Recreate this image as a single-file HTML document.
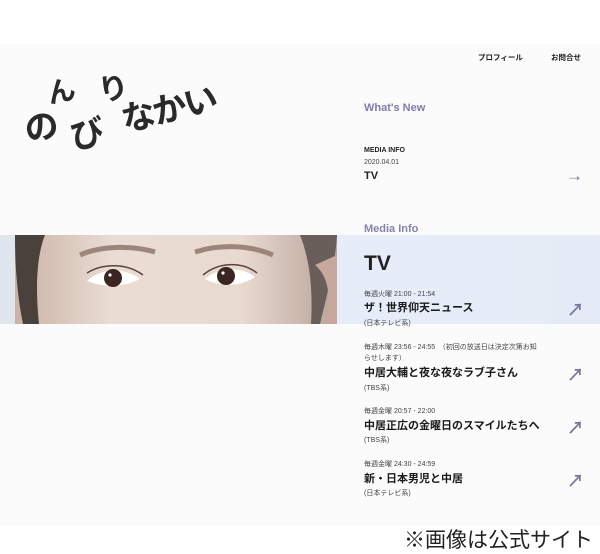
<!DOCTYPE html>
<html><head><meta charset="utf-8"><style>
*{margin:0;padding:0;box-sizing:border-box}
body{width:600px;height:552px;background:#fff;position:relative;overflow:hidden;font-family:"Liberation Sans","Noto Sans CJK JP",sans-serif;color:#222}
.a{position:absolute;white-space:nowrap}
#pg{position:absolute;left:0;top:44px;width:600px;height:482px;background:#fbfbfb}
.band{position:absolute;left:0;top:235px;width:600px;height:89px;background:linear-gradient(90deg,#dfe6f0,#e6edf8 60%,#e4ebf6)}
.hand{font-family:"Noto Sans CJK JP",sans-serif;font-size:34px;color:#2a2a2a;font-weight:bold}
.sm{font-size:7px;color:#444}
.tt{font-size:11px;font-weight:bold;color:#1a1a1a}
.ar{font-size:17px;color:#7a7898;font-weight:bold}
</style></head><body>
<div id="pg"></div>
<div class="band"></div>
<svg class="a" style="left:15px;top:235px" width="322" height="89" viewBox="0 0 322 89">
<defs><linearGradient id="sk" x1="0" x2="1"><stop offset="0" stop-color="#c9b2a6"/><stop offset=".3" stop-color="#eadcd2"/><stop offset=".7" stop-color="#e9dad0"/><stop offset="1" stop-color="#b8a398"/></linearGradient></defs>
<rect x="0" y="0" width="322" height="89" fill="url(#sk)"/>
<path d="M0 0H30C22 20 20 50 24 89H8C2 60 0 30 0 0Z" fill="#4a403c"/>
<path d="M322 0H285C295 25 298 55 296 89H305C312 60 320 30 322 0Z" fill="#6a5e5a"/>
<path d="M300 30C312 40 318 60 310 89H322V20Z" fill="#c6a99c"/>
<path d="M65 20C85 11 115 10 140 17" stroke="#9c857b" stroke-width="5" fill="none"/>
<path d="M180 17C205 9 235 10 258 20" stroke="#9c857b" stroke-width="5" fill="none"/>
<path d="M72 46C85 33 110 32 125 44C110 52 88 53 72 46Z" fill="#fff"/>
<path d="M190 44C205 31 228 32 240 42C225 52 205 52 190 44Z" fill="#fff"/>
<circle cx="98" cy="43" r="9" fill="#3a2522"/><circle cx="211" cy="41" r="9" fill="#3a2522"/>
<circle cx="95" cy="40" r="1.6" fill="#fff"/><circle cx="208" cy="38" r="1.6" fill="#fff"/>
<path d="M72 38C88 28 112 28 128 40" stroke="#5a443e" stroke-width="1.5" fill="none"/>
<path d="M188 40C205 26 228 27 242 38" stroke="#5a443e" stroke-width="1.5" fill="none"/>
</svg>
<div class="a hand" style="left:24px;top:100px;transform:rotate(-12deg)">の</div>
<div class="a hand" style="left:47px;top:70px;font-size:28px;transform:rotate(-12deg)">ん</div>
<div class="a hand" style="left:70px;top:107px;transform:rotate(-12deg)">び</div>
<div class="a hand" style="left:98px;top:64px;font-size:30px;transform:rotate(-12deg)">り</div>
<div class="a hand" style="left:120px;top:82px;letter-spacing:-2px;transform:rotate(-14deg)">なかい</div>
<div class="a" style="left:478px;top:52px;font-size:7.5px;font-weight:bold">プロフィール</div>
<div class="a" style="left:551px;top:52px;font-size:7.5px;font-weight:bold">お問合せ</div>
<div class="a" style="left:364px;top:102px;font-size:11px;font-weight:bold;color:#7f7cab">What's New</div>
<div class="a" style="left:364px;top:147px;font-size:7px;font-weight:bold">MEDIA INFO</div>
<div class="a sm" style="left:364px;top:159px">2020.04.01</div>
<div class="a" style="left:364px;top:170px;font-size:11px;font-weight:bold">TV</div>
<div class="a ar" style="left:566px;top:166px">→</div>
<div class="a" style="left:364px;top:223px;font-size:11px;font-weight:bold;color:#8582ad">Media Info</div>
<div class="a" style="left:364px;top:252px;font-size:21px;font-weight:bold">TV</div>
<div class="a sm" style="left:364px;top:289px">毎週火曜 21:00 - 21:54</div>
<div class="a tt" style="left:364px;top:299px">ザ！世界仰天ニュース</div>
<div class="a sm" style="left:364px;top:318px">(日本テレビ系)</div>
<div class="a ar" style="left:567px;top:296px">↗</div>
<div class="a sm" style="left:364px;top:342px">毎週木曜 23:56 - 24:55　（初回の放送日は決定次第お知</div>
<div class="a sm" style="left:364px;top:353px">らせします）</div>
<div class="a tt" style="left:364px;top:364px">中居大輔と夜な夜なラブ子さん</div>
<div class="a sm" style="left:364px;top:383px">(TBS系)</div>
<div class="a ar" style="left:567px;top:361px">↗</div>
<div class="a sm" style="left:364px;top:406px">毎週金曜 20:57 - 22:00</div>
<div class="a tt" style="left:364px;top:417px">中居正広の金曜日のスマイルたちへ</div>
<div class="a sm" style="left:364px;top:435px">(TBS系)</div>
<div class="a ar" style="left:567px;top:414px">↗</div>
<div class="a sm" style="left:364px;top:459px">毎週金曜 24:30 - 24:59</div>
<div class="a tt" style="left:364px;top:470px">新・日本男児と中居</div>
<div class="a sm" style="left:364px;top:488px">(日本テレビ系)</div>
<div class="a ar" style="left:567px;top:467px">↗</div>
<div class="a" style="left:404px;top:524px;font-size:21px;color:#222">※画像は公式サイト</div>
</body></html>
